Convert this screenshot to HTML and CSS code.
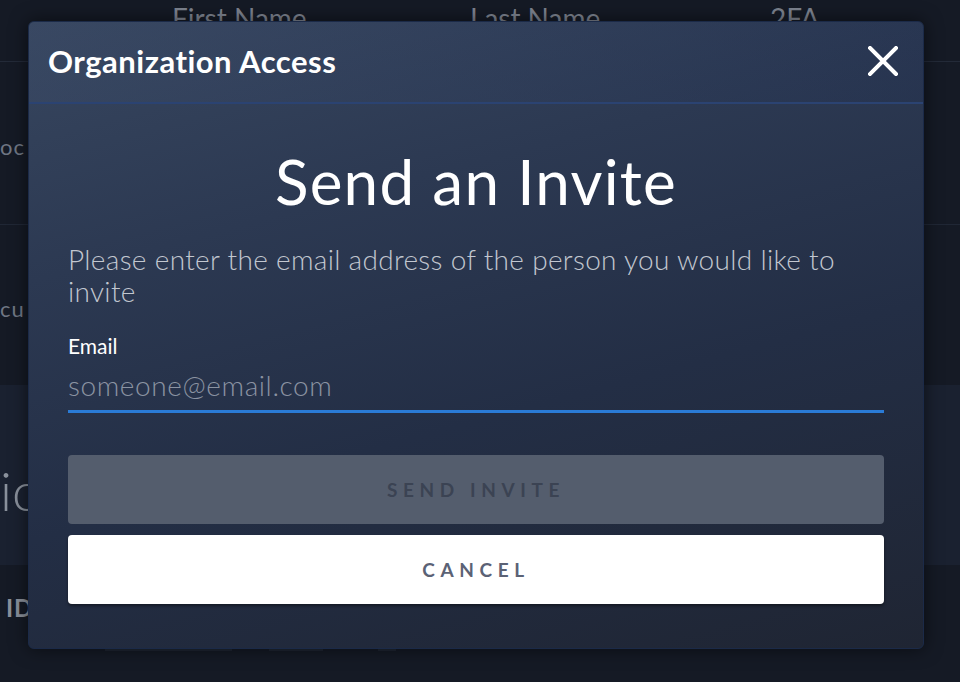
FILE: index.html
```html
<!DOCTYPE html>
<html lang="en">
<head>
<meta charset="utf-8">
<title>Organization Access</title>
<link rel="stylesheet" href="styles.css">
</head>
<body>
<div class="page">
  <div class="thead">
    <span></span>
    <span class="th">First Name</span>
    <span class="th">Last Name</span>
    <span class="th">2FA</span>
  </div>
  <div class="row row-a"><span class="cell">oc</span></div>
  <div class="row row-b"><span class="cell">cu</span></div>
  <div class="band"><span class="big">ic</span></div>
  <div class="row row-c"><span class="cell bold">ID</span></div>
  <div class="foot-lines">
    <span class="fl fl1"></span><span class="fl fl2"></span><span class="fl fl3"></span>
  </div>
</div>

<div class="modal" role="dialog" aria-labelledby="modal-title">
  <div class="modal-header">
    <h2 id="modal-title" class="modal-title">Organization Access</h2>
    <button class="close" aria-label="Close">
      <svg width="30" height="30" viewBox="0 0 30 30"><path d="M2 2 L28 28 M28 2 L2 28" stroke="#ffffff" stroke-width="4" stroke-linecap="square" fill="none"/></svg>
    </button>
  </div>
  <div class="modal-body">
    <h1 class="headline">Send an Invite</h1>
    <p class="lead">Please enter the email address of the person you would like to invite</p>
    <label class="field-label" for="email">Email</label>
    <input id="email" class="field-input" type="email" placeholder="someone@email.com">
    <div class="actions">
      <button class="btn btn-send" disabled>SEND INVITE</button>
      <button class="btn btn-cancel">CANCEL</button>
    </div>
  </div>
</div>
</body>
</html>
```

FILE: styles.css
```css
* { box-sizing: border-box; }
html, body { margin: 0; padding: 0; }
body {
  width: 960px;
  height: 682px;
  overflow: hidden;
  background: #151a25;
  font-family: Lato, "Noto Sans", sans-serif;
  position: relative;
}

.page { width: 960px; height: 682px; }

.thead {
  height: 62px;
  border-bottom: 1px solid #232a38;
  display: grid;
  grid-template-columns: 172px 298px 300px 1fr;
  align-items: start;
  padding-top: 1px;
}
.th {
  color: #7d838f;
  font-size: 28px;
  white-space: nowrap;
}

.row { display: flex; align-items: center; }
.row-a { height: 163px; border-bottom: 1px solid #202735; }
.row-b { height: 160px; }
.cell { color: #6f7683; font-size: 22px; letter-spacing: 1px; }
.cell.bold { font-weight: 700; color: #8a909a; font-size: 24px; margin-left: 6px; }
.row-a .cell { margin-top: 6px; }
.row-b .cell { margin-top: 6px; }

.band {
  height: 180px;
  background: #1a2130;
  display: flex;
  align-items: center;
}
.big {
  color: #8a919c;
  font-size: 54px;
  font-weight: 300;
  margin-top: 30px;
}
.row-c { height: 84px; }

.foot-lines { display: flex; height: 2px; }
.fl { height: 2px; background: #1f2633; }
.fl1 { margin-left: 105px; width: 127px; }
.fl2 { margin-left: 37px; width: 54px; }
.fl3 { margin-left: 55px; width: 18px; }

/* Modal overlay */
.modal {
  position: absolute;
  left: 28px;
  top: 21px;
  width: 896px;
  height: 628px;
  border: 1px solid #1b2a48;
  border-radius: 6px;
  background: linear-gradient(165deg, #37465f 0%, #2c3952 30%, #232e45 60%, #1f2533 100%);
  box-shadow: 0 0 18px rgba(0, 0, 0, 0.55);
  display: flex;
  flex-direction: column;
  overflow: hidden;
}
.modal-header {
  height: 82px;
  border-bottom: 2px solid #2b4372;
  display: flex;
  align-items: center;
  justify-content: space-between;
  padding: 0 25px 2px 19px;
  background: linear-gradient(90deg, rgba(60,76,105,0.35) 0%, rgba(30,45,80,0.25) 100%);
}
.modal-title {
  margin: 0;
  color: #ffffff;
  font-size: 31px;
  font-weight: 700;
  letter-spacing: 0.5px;
}
.close {
  background: none;
  border: 0;
  padding: 0;
  width: 30px;
  height: 30px;
  display: flex;
  cursor: pointer;
}

.modal-body {
  padding: 0 39px;
  display: flex;
  flex-direction: column;
}
.headline {
  margin: 43px 0 0;
  text-align: center;
  color: #ffffff;
  font-size: 62px;
  font-weight: 400;
  letter-spacing: 1.2px;
  line-height: 68px;
}
.lead {
  margin: 28px 0 0;
  color: #c2c7d0;
  font-size: 28px;
  font-weight: 300;
  letter-spacing: 0.32px;
  line-height: 32px;
}
.field-label {
  margin-top: 25px;
  color: #ffffff;
  font-size: 21px;
  line-height: 28px;
}
.field-input {
  margin-top: 9px;
  width: 100%;
  background: transparent;
  border: 0;
  border-bottom: 3px solid #2a7bd6;
  padding: 0 0 9px;
  color: #ffffff;
  font-family: inherit;
  font-size: 28px;
  font-weight: 300;
  letter-spacing: 0.6px;
  line-height: 32px;
  outline: none;
}
.field-input::placeholder { color: #8b93a2; opacity: 1; }

.actions {
  margin-top: 42px;
  display: flex;
  flex-direction: column;
  gap: 11px;
}
.btn {
  height: 69px;
  border: 0;
  border-radius: 4px;
  font-family: inherit;
  font-size: 19px;
  font-weight: 700;
  letter-spacing: 5.6px;
  padding-left: 6px;
  cursor: pointer;
}
.btn-send {
  background: #545d6d;
  color: #3b4353;
}
.btn-cancel {
  background: #ffffff;
  color: #5b6275;
  box-shadow: 0 2px 3px rgba(0,0,0,0.4);
}
```
